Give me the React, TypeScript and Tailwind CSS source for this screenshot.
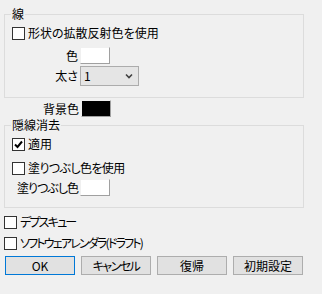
import { ReactNode } from "react";

const font = { fontFamily: '"Noto Sans CJK JP", "Liberation Sans", sans-serif' };

const Check = ({ checked, label, cls = "" }: { checked?: boolean; label: string; cls?: string }) => (
  <div className="flex items-center h-[14px] gap-[3px]">
    <span className="w-[13px] h-[13px] border border-[#333333] bg-white flex items-center justify-center shrink-0">
      {checked && (
        <svg width="9" height="9" viewBox="0 0 9 9">
          <path d="M1 4.5 L3.5 7 L8 1.5" stroke="#000" strokeWidth="2" fill="none" />
        </svg>
      )}
    </span>
    <span className={`leading-[14px] whitespace-nowrap ${cls}`}>{label}</span>
  </div>
);

const Swatch = ({ color }: { color: string }) => (
  <span
    className={`w-[30px] h-[17px] shrink-0 border border-[#f0f0f0] border-r-[#a0a0a0] border-b-[#a0a0a0] ${color}`}
  />
);

const Row = ({ label, w, children }: { label: string; w: string; children: ReactNode }) => (
  <div className="flex items-center gap-[2px]">
    <span className={`${w} flex justify-end whitespace-nowrap leading-[14px]`}>{label}</span>
    {children}
  </div>
);

const Group = ({ title, children, cls }: { title: string; children: ReactNode; cls: string }) => (
  <fieldset className={`w-[300px] border border-[#dcdcdc] pl-[7px] ${cls}`}>
    <legend className="px-[1px] -ml-[1px] leading-[14px]">{title}</legend>
    {children}
  </fieldset>
);

const Btn = ({ label, primary, cls = "" }: { label: string; primary?: boolean; cls?: string }) => (
  <button
    className={`w-[70px] h-[19px] bg-[#e1e1e1] border leading-[14px] ${cls} ${
      primary ? "border-[#0078d7]" : "border-[#adadad]"
    }`}
  >
    {label}
  </button>
);

export default function App() {
  return (
    <div
      className="w-[322px] h-[294px] bg-[#f0f0f0] pl-[4px] pt-[7px] text-[12px] text-black [font-feature-settings:'palt']"
      style={font}
    >
      <Group title="線" cls="pb-[11px]">
        <div className="mt-[5px]">
          <Check label="形状の拡散反射色を使用" />
        </div>
        <div className="mt-[7px] flex flex-col gap-[2px]">
          <Row label="色" w="w-[66px]">
            <Swatch color="bg-white" />
          </Row>
          <Row label="太さ" w="w-[66px]">
            <div className="w-[59px] h-[20px] bg-[#e5e5e5] border border-[#acacac] flex items-center justify-between pl-[3px] pr-[5px]">
              <span className="leading-[14px]">1</span>
              <svg width="8" height="6" viewBox="0 0 8 6">
                <path d="M1 1.5 L4 4.5 L7 1.5" stroke="#404040" strokeWidth="1.6" fill="none" />
              </svg>
            </div>
          </Row>
        </div>
      </Group>

      <div className="mt-[2px]">
        <Row label="背景色" w="w-[75px]">
          <Swatch color="bg-black" />
        </Row>
      </div>

      <Group title="隠線消去" cls="mt-[1px] pb-[11px]">
        <div className="mt-[5px] flex flex-col gap-[10px]">
          <Check checked label="適用" />
          <Check label="塗りつぶし色を使用" cls="tracking-[-0.6px]" />
        </div>
        <div className="mt-[4px] tracking-[-1px]">
          <Row label="塗りつぶし色" w="w-[66px]">
            <Swatch color="bg-white" />
          </Row>
        </div>
      </Group>

      <div className="mt-[7px] flex flex-col gap-[7px]">
        <Check label="デプスキュー" cls="tracking-[-1.8px]" />
        <Check label="ソフトウェアレンダラ(ドラフト)" cls="tracking-[-1.8px]" />
      </div>

      <div className="mt-[6px] flex gap-[6px] pl-[1px]">
        <Btn label="OK" primary />
        <Btn label="キャンセル" cls="tracking-[-1.5px]" />
        <Btn label="復帰" />
        <Btn label="初期設定" />
      </div>
    </div>
  );
}
